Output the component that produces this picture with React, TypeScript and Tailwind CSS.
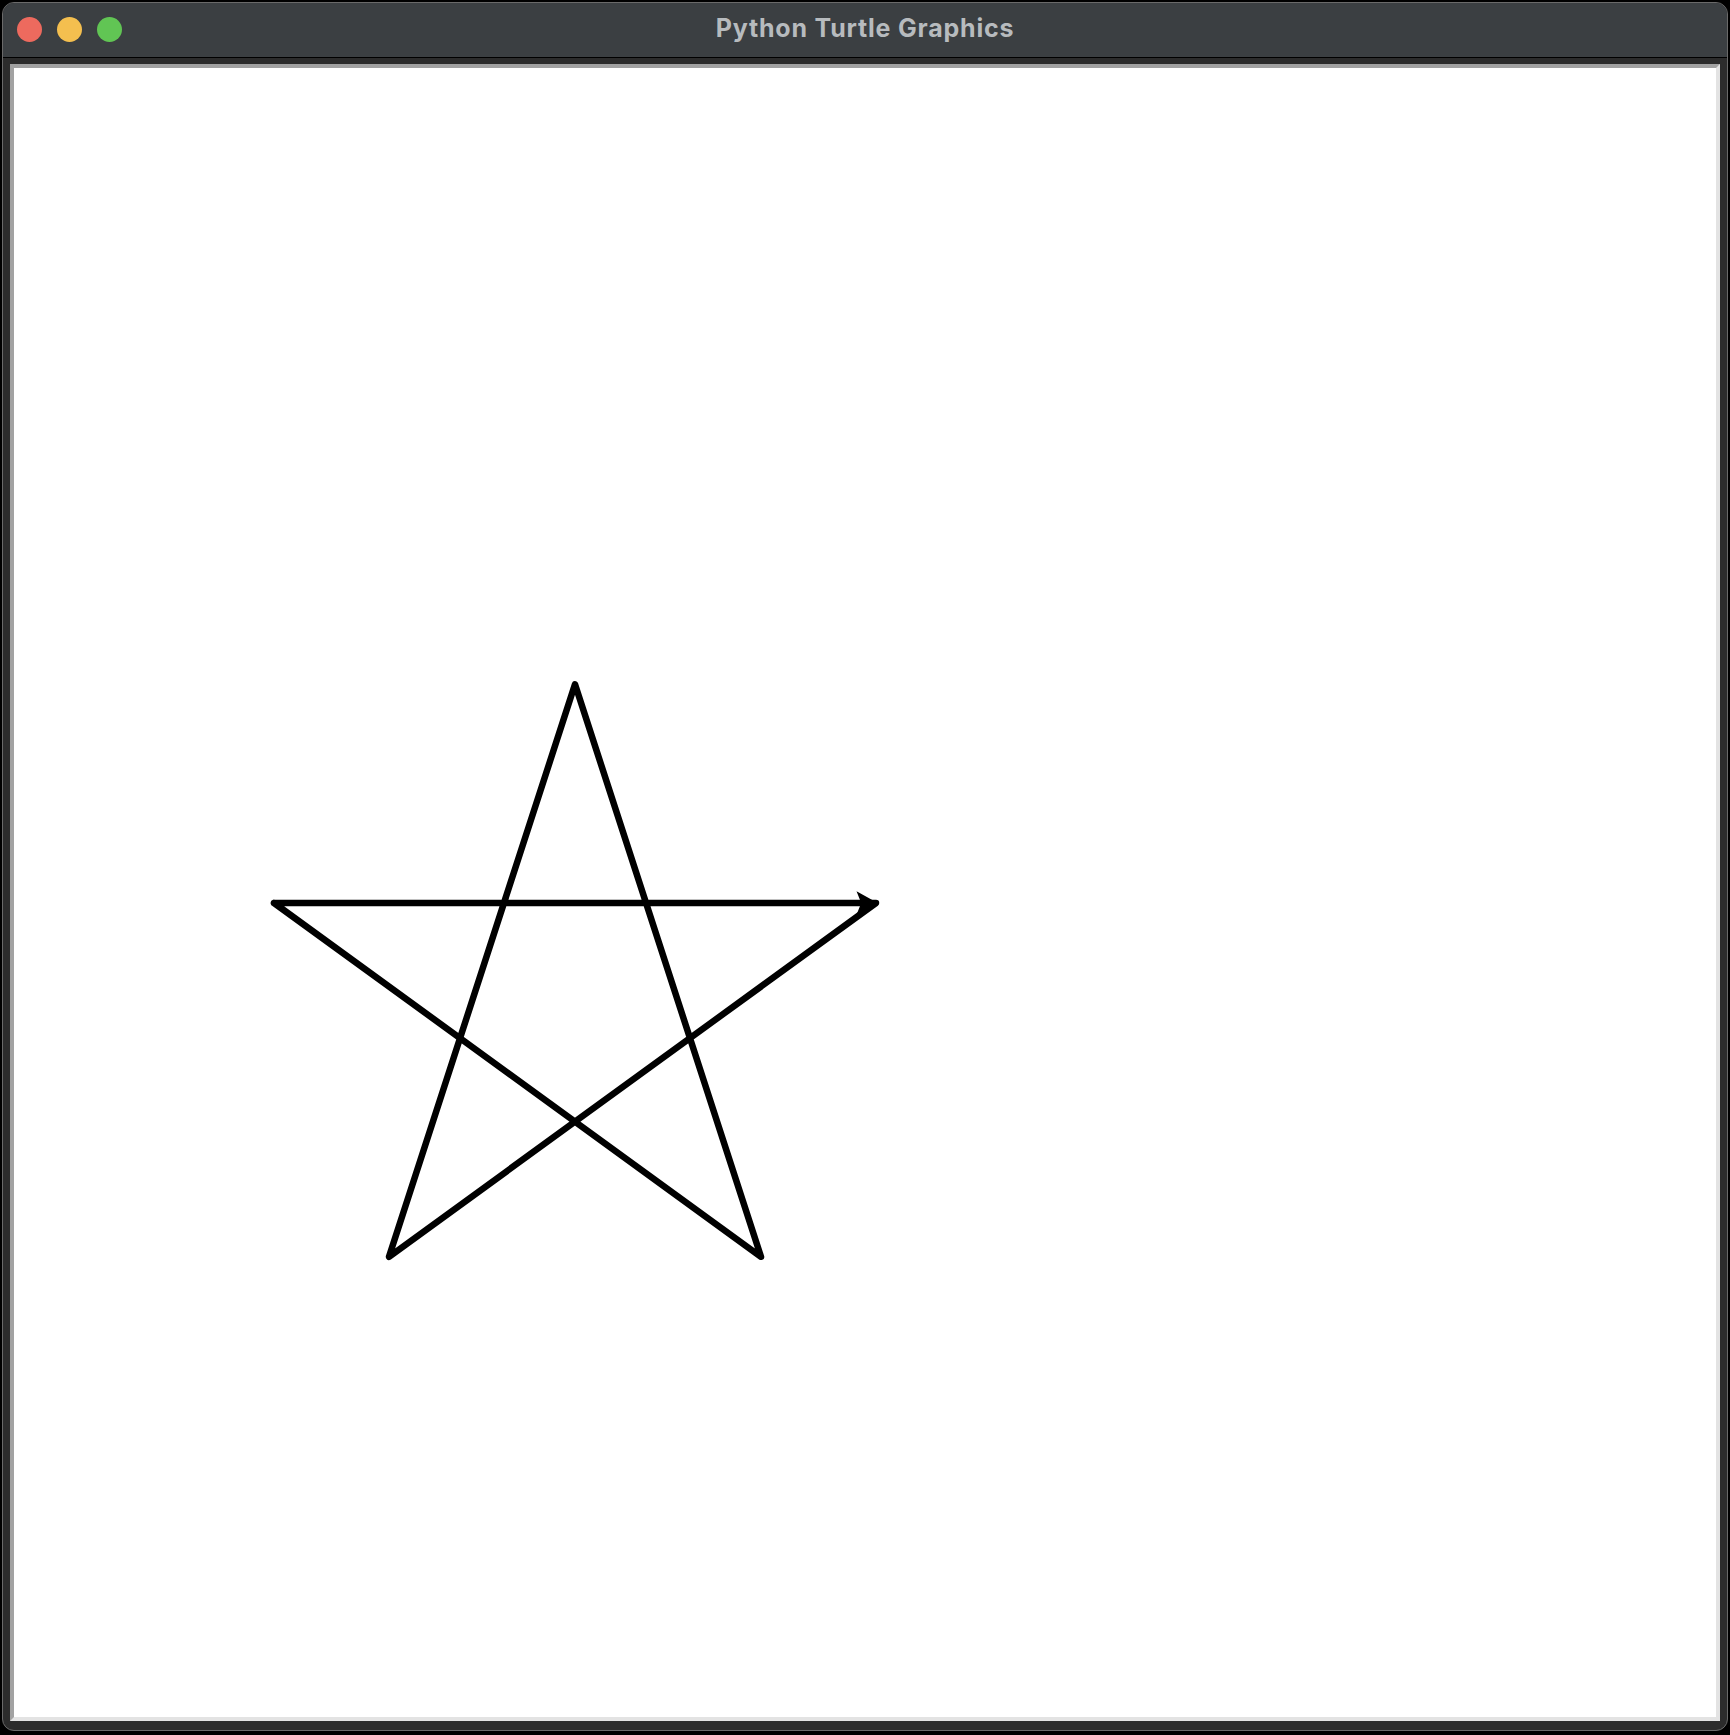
import React from "react";

const L = 602;
const cx = 575;
const yTop = 903;
const left: [number, number] = [cx - L / 2, yTop];
const right: [number, number] = [cx + L / 2, yTop];
const c36 = Math.cos((36 * Math.PI) / 180);
const s36 = Math.sin((36 * Math.PI) / 180);
const c72 = Math.cos((72 * Math.PI) / 180);
const s72 = Math.sin((72 * Math.PI) / 180);
const bl: [number, number] = [right[0] - L * c36, right[1] + L * s36];
const top: [number, number] = [bl[0] + L * c72, bl[1] - L * s72];
const br: [number, number] = [top[0] + L * c72, top[1] + L * s72];

const pts = [left, right, bl, top, br, left]
  .map((p) => `${p[0].toFixed(1)},${p[1].toFixed(1)}`)
  .join(" ");

const tip = right;
const arrow = [
  [tip[0], tip[1]],
  [tip[0] - 18, tip[1] - 10],
  [tip[0] - 14, tip[1]],
  [tip[0] - 18, tip[1] + 10],
]
  .map((p) => `${p[0]},${p[1]}`)
  .join(" ");

export default function App() {
  return (
    <div className="w-[1730px] h-[1735px] bg-black overflow-hidden">
      <div className="ml-[2px] mt-[2px] w-[1726px] h-[1729px] rounded-[12px] border border-[#6a6a6a] bg-[#2c2c2c] flex flex-col overflow-hidden">
        <div className="h-[55px] shrink-0 bg-[#3b3f42] border-b border-black grid grid-cols-[1fr_auto_1fr] items-center">
          <div className="flex items-center gap-[15px] pl-[14px] pb-[2px]">
            <div className="w-[25px] h-[25px] rounded-full bg-[#ed6a5e]" />
            <div className="w-[25px] h-[25px] rounded-full bg-[#f4bf4f]" />
            <div className="w-[25px] h-[25px] rounded-full bg-[#61c554]" />
          </div>
          <div
            className="text-[25px] font-bold tracking-[0.8px] text-[#b7bbbe] pb-[3px] leading-none"
            style={{ fontFamily: "Inter, 'Liberation Sans', sans-serif" }}
          >
            Python Turtle Graphics
          </div>
          <div />
        </div>
        <div className="flex-1 pt-[6px] px-[7px] pb-[9px] flex">
          <div className="flex-1 border-4 border-t-[#a2a2a2] border-l-[#a2a2a2] border-r-[#e3e3e3] border-b-[#e3e3e3] bg-white overflow-hidden">
            <svg width="1702" height="1649" viewBox="14 68 1702 1649" className="block">
              <polyline
                points={pts}
                fill="none"
                stroke="#000"
                strokeWidth={6.5}
                strokeLinejoin="round"
                strokeLinecap="round"
              />
              <polygon points={arrow} fill="#000" stroke="#000" strokeWidth={1.5} strokeLinejoin="miter" />
            </svg>
          </div>
        </div>
      </div>
    </div>
  );
}
